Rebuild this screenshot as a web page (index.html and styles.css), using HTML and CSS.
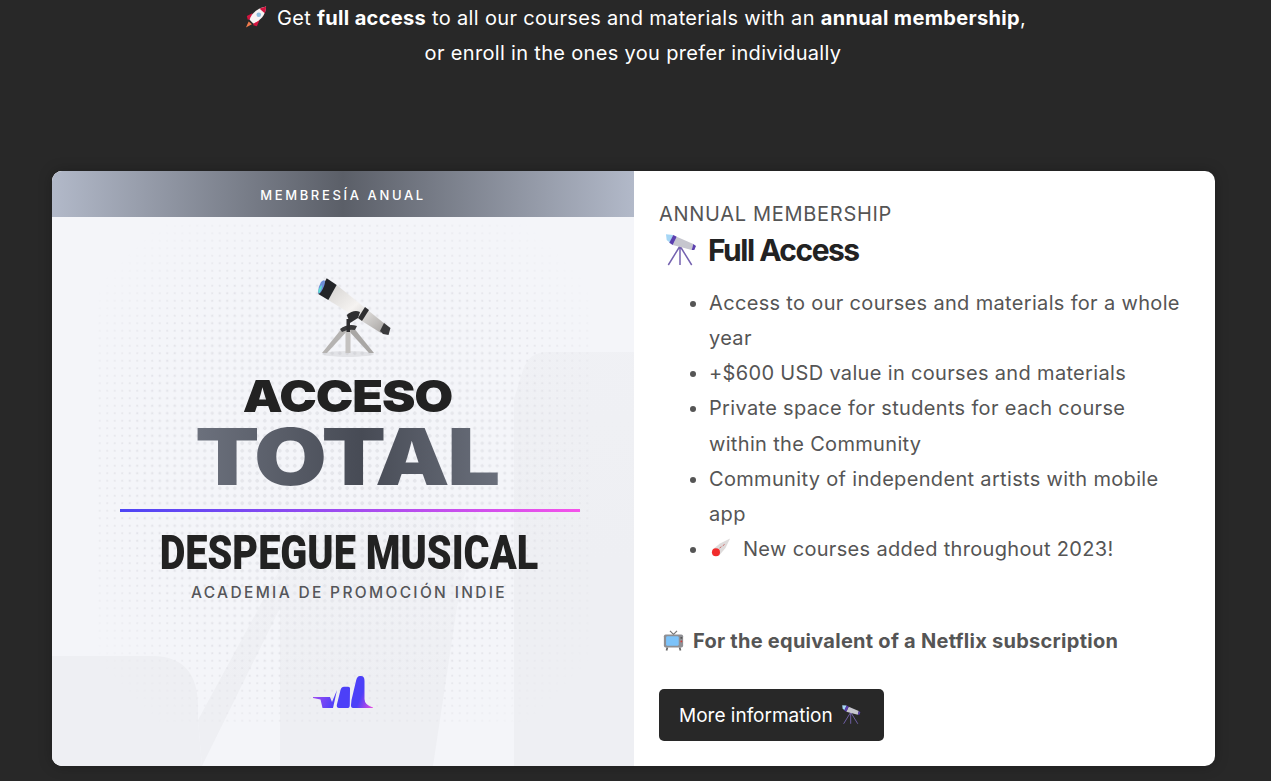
FILE: index.html
```html
<!DOCTYPE html>
<html lang="en">
<head>
<meta charset="utf-8">
<title>Membership</title>
<link rel="stylesheet" href="styles.css">
</head>
<body>
<svg class="defs" width="0" height="0" aria-hidden="true">
  <defs>
    <linearGradient id="tube" x1="0" y1="0" x2="1" y2="1">
      <stop offset="0" stop-color="#d4d2d0"/><stop offset=".45" stop-color="#f5f3f1"/><stop offset="1" stop-color="#a5a2a0"/>
    </linearGradient>
    <linearGradient id="logoGrad" gradientUnits="userSpaceOnUse" x1="0" y1="10" x2="60" y2="34">
      <stop offset="0" stop-color="#b04ff0"/><stop offset=".42" stop-color="#4c40f8"/><stop offset=".75" stop-color="#4c40f8"/><stop offset="1" stop-color="#f04be0"/>
    </linearGradient>
    <linearGradient id="markFade" x1="0" y1="0" x2="0" y2="1">
      <stop offset="0" stop-color="#eeeff3" stop-opacity=".35"/><stop offset=".7" stop-color="#eeeff3"/>
    </linearGradient>
    <linearGradient id="markFadeRight" x1="0" y1="0" x2="0" y2="1">
      <stop offset="0" stop-color="#eeeff3" stop-opacity=".75"/><stop offset=".5" stop-color="#eeeff3"/>
    </linearGradient>
    <symbol id="scope" viewBox="0 0 33 33">
      <g stroke="#7563b0" stroke-width="1.500" fill="none">
        <path d="M16 12 L4.300 31 M16 12 V31 M16 12 L27.700 31"/>
      </g>
      <path d="M12.700 2.700 L29.300 10 L27.700 16 L8.700 11 Z" fill="#c6c6ce"/>
      <path d="M2 .3 L9.300 1 L6 8.700 L2.700 6 Z" fill="#a6d6f5"/>
      <path d="M9.300 1 L12.700 2.700 L8.700 11 L5.300 8.700 Z" fill="#5b3fae"/>
      <path d="M29.300 10 L32 12 L30.300 16 L27.700 16 Z" fill="#5b3fae"/>
    </symbol>
  </defs>
</svg>

<header class="intro">
  <p class="intro-line">
    <svg class="emoji" viewBox="0 0 24 24" aria-hidden="true">
      <path d="M4 17 L1 23.500 L7.500 20 Z" fill="#f27c4d"/>
      <path d="M8 8 L2 11 L3 15 L8 14 Z M16 15 L13 22 L9 21 L10 16 Z" fill="#d3143f"/>
      <path d="M5 15 C7 8 13 2.500 23 .5 C22.500 10 17 16 9 19 Z" fill="#f7f3f3"/>
      <path d="M16 3 C18 1.800 20.500 1 23 .5 C23 3 22.500 5.500 21.500 8 Z" fill="#d3143f"/>
      <circle cx="15" cy="9.500" r="2.500" fill="#8fbfe0"/>
    </svg>
    Get <strong>full access</strong> to all our courses and materials with an <strong>annual membership</strong>,
  </p>
  <p class="intro-line intro-line-second">or enroll in the ones you prefer individually</p>
</header>

<main class="card">
  <section class="poster">
    <div class="poster-band">MEMBRESÍA ANUAL</div>
    <div class="poster-art">
      <svg class="watermark" viewBox="0 0 582 549" preserveAspectRatio="none" aria-hidden="true">
        <path d="M0 439 H100 Q146 439 146 490 V503 L150 549 H0 Z" fill="#eeeff3"/>
        <path d="M146 503 L255 302 Q262 293 275 293 H428 L405 390 L381 549 H228 V391 L150 549 Z" fill="url(#markFade)"/>
        <path d="M462 549 V182 L471 153 Q477 135 495 135 H582 V549 Z" fill="url(#markFadeRight)"/>
      </svg>
      <div class="dots"></div>
      <div class="poster-content">
        <svg class="scope-large" viewBox="0 0 80 80" aria-hidden="true">
          <ellipse cx="35" cy="77" rx="26" ry="3" fill="#000" opacity=".07"/>
          <path d="M30 50 L9 76 L14 76 L35 53 Z" fill="#b5b3b1"/>
          <path d="M40 50 L61 76 L56 76 L35 53 Z" fill="#a9a7a5"/>
          <rect x="32.500" y="52" width="5" height="24" fill="#c4c2c0"/>
          <path d="M27 52 Q35 46 44 49 L42 53 Q35 52 29 55 Z" fill="#3a3a3c"/>
          <rect x="33.500" y="42" width="3.500" height="13" fill="#2e2e30"/>
          <path d="M23.700 8 L72 47 L68 56 L15.300 23 Z" fill="url(#tube)"/>
          <path d="M13.700 1.300 L23.700 8 L15.300 23 L5.300 17 Z" fill="#232528"/>
          <path d="M8 5 Q11 2 12 4 Q12 9 8 15 Q5.500 18 5 15.500 Q5 10 8 5 Z" fill="#6d8fd8"/>
          <path d="M5.500 13 Q7 9 9 8 Q9 12 6.500 16 Q5 16.500 5.500 13 Z" fill="#5ce0d0"/>
          <path d="M52 30 L56 33 L49 44 L45 41 Z" fill="#2e2e30"/>
          <path d="M71 46 L77.500 51 L75.500 58 L70 57 L67 54 Z" fill="#3a3a3c"/>
          <path d="M33.700 38 Q41 32 47 35 L45 41 L37 46 Z" fill="#2e2e30"/>
        </svg>
        <div class="acceso">ACCESO</div>
        <div class="total">TOTAL</div>
        <div class="rule"></div>
        <div class="despegue">DESPEGUE MUSICAL</div>
        <div class="academia">ACADEMIA DE PROMOCIÓN INDIE</div>
        <svg class="logo" viewBox="0 0 60 34" aria-hidden="true">
          <path fill="url(#logoGrad)" d="M0 22 H17 L19 27 L24 15 L20 33 H9.500 L7.500 24.500 L0 23 Z"/>
          <path fill="url(#logoGrad)" d="M26 33 Q23.500 33 23.800 30 L27.500 15 Q28.500 11.700 31 11.700 H35 Q37.500 11.700 37 15 L36.800 30 Q36.800 33 35 33 Z"/>
          <path fill="url(#logoGrad)" d="M40 33 Q37.800 33 38 30 L38.500 25 L43 6 Q44 1 47 1 H48 Q51.500 1 51.500 6 V24 Q51.500 30 60 32.500 L60 33 Z"/>
        </svg>
      </div>
    </div>
  </section>

  <section class="details">
    <p class="eyebrow">ANNUAL MEMBERSHIP</p>
    <h2 class="title">
      <svg class="emoji-title" aria-hidden="true"><use href="#scope"/></svg>
      Full Access
    </h2>
    <ul class="features">
      <li>Access to our courses and materials for a whole year</li>
      <li>+$600 USD value in courses and materials</li>
      <li>Private space for students for each course within the Community</li>
      <li>Community of independent artists with mobile app</li>
      <li>
        <svg class="emoji emoji-comet" viewBox="0 0 24 24" aria-hidden="true">
          <path d="M23 .5 L12 6 L4.500 12 L4 19 L11 19 L18 11 Z" fill="#dedbdb"/>
          <circle cx="7.600" cy="15.500" r="4.400" fill="#f12c2c"/>
          <path d="M11.500 11 l2 -1.500 M15 8.500 l2 -1.500" stroke="#c96565" stroke-width="1"/>
        </svg>
        New courses added throughout 2023!
      </li>
    </ul>
    <p class="note">
      <svg class="emoji" viewBox="0 0 24 24" aria-hidden="true">
        <path d="M8 1 L12 5 L16 1" stroke="#777" stroke-width="1.400" fill="none"/>
        <rect x="1" y="5" width="22" height="15" rx="2" fill="#8f8f93"/>
        <rect x="3.500" y="7" width="14.500" height="11" rx="1.500" fill="#7cc3fa"/>
        <rect x="20" y="8" width="2" height="2" fill="#555"/>
        <circle cx="21" cy="13" r="1" fill="#d63a3a"/>
        <path d="M5 20 L4 23.500 M19 20 L20 23.500" stroke="#666" stroke-width="2"/>
      </svg>
      For the equivalent of a Netflix subscription
    </p>
    <a class="cta" href="#">More information
      <svg class="emoji-cta" aria-hidden="true"><use href="#scope"/></svg>
    </a>
  </section>
</main>
</body>
</html>
```

FILE: styles.css
```css
* { box-sizing: border-box; }
html, body { margin: 0; height: 100%; overflow: hidden; }
body {
  background: #282828;
  font-family: "Inter", "Noto Sans", sans-serif;
  color: #fff;
}
.defs { display: block; height: 0; }

.intro {
  padding-top: 1px;
  height: 171px;
  text-align: center;
  font-size: 20px;
  line-height: 35px;
}
.intro-line { margin: 0; letter-spacing: .33px; }
.intro-line-second { padding-right: 5px; }
.intro-line strong { font-weight: 700; }
.emoji {
  width: 22px;
  height: 22px;
  vertical-align: -3px;
  margin-right: 4px;
}

.card {
  display: flex;
  width: 1163px;
  height: 595px;
  margin-left: 52px;
  background: #fff;
  border-radius: 10px;
  overflow: hidden;
  box-shadow: 0 0 14px rgba(0, 0, 0, .25);
}

.poster {
  flex: 0 0 582px;
  display: flex;
  flex-direction: column;
  background: #f4f5f9;
}
.poster-band {
  height: 46px;
  padding-top: 1px;
  display: flex;
  align-items: center;
  justify-content: center;
  background: linear-gradient(90deg, #b2b9c9 0%, #5b5f68 50%, #b2b9c9 100%);
  font-size: 13px;
  letter-spacing: 2.650px;
  font-weight: 500;
  color: #fff;
}
.poster-art {
  position: relative;
  flex: 1;
  overflow: hidden;
}
.watermark {
  position: absolute;
  inset: 0;
  width: 100%;
  height: 100%;
}
.dots {
  position: absolute;
  left: 44px;
  top: 5px;
  width: 495px;
  height: 505px;
  background-image: radial-gradient(circle, #e4e5ea .8px, transparent 1.200px);
  background-size: 7.500px 7.500px;
  -webkit-mask-image: radial-gradient(ellipse 62% 62% at 50% 50%, #000 70%, transparent 100%);
  mask-image: radial-gradient(ellipse 62% 62% at 50% 50%, #000 70%, transparent 100%);
}
.dots::after {
  content: "";
  position: absolute;
  inset: 0;
  background-image: radial-gradient(circle, #e5e6eb 1.500px, transparent 2px);
  background-size: 7.500px 7.500px;
  -webkit-mask-image: radial-gradient(ellipse 45% 45% at 50% 50%, #000 40%, transparent 100%);
  mask-image: radial-gradient(ellipse 45% 45% at 50% 50%, #000 40%, transparent 100%);
}
.poster-content {
  position: relative;
  display: flex;
  flex-direction: column;
  align-items: center;
  padding: 60px 0 0 12px;
}
.scope-large {
  width: 80px;
  height: 80px;
  margin-left: 8px;
  filter: blur(.3px);
}
.acceso {
  margin: 20px 4px 0 0;
  font-family: "Inter", sans-serif;
  font-weight: 900;
  font-size: 44px;
  line-height: 38px;
  letter-spacing: -1px;
  color: #222;
  transform: scaleX(1.145);
}
.total {
  margin: 11px 4px 0 0;
  font-family: "Inter", sans-serif;
  font-weight: 900;
  font-size: 78px;
  line-height: 62px;
  letter-spacing: -2px;
  transform: scaleX(1.206);
  background: linear-gradient(90deg, #6c717d 0%, #474b55 55%, #6a6f7b 100%);
  -webkit-background-clip: text;
  background-clip: text;
  color: transparent;
}
.rule {
  width: 460px;
  height: 3px;
  margin: 21px 0 0 2px;
  background: linear-gradient(90deg, #4d45f5, #f552ea);
}
.despegue {
  margin-top: 19px;
  font-family: "Roboto", sans-serif;
  font-weight: 900;
  font-size: 49px;
  line-height: 44px;
  white-space: nowrap;
  color: #222;
  transform: scaleX(.809);
}
.academia {
  margin-top: 8px;
  font-size: 15.500px;
  line-height: 20px;
  letter-spacing: 2.330px;
  font-weight: 500;
  color: #55565a;
}
.logo {
  width: 60px;
  height: 34px;
  margin-top: 72px;
  margin-left: -12px;
}

.details {
  flex: 1;
  padding: 32px 30px 0 25px;
  color: #555;
}
.eyebrow {
  margin: 0;
  font-size: 20px;
  line-height: 22px;
  letter-spacing: .7px;
}
.title {
  display: flex;
  align-items: center;
  gap: 11px;
  margin: 3px 0 0 5px;
  height: 44px;
  font-size: 30px;
  font-weight: 700;
  letter-spacing: -1.500px;
  color: #222;
}
.emoji-title {
  width: 33px;
  height: 33px;
}
.features {
  margin: 13.700px 0 0;
  padding-left: 50px;
  font-size: 20px;
  line-height: 35.200px;
  letter-spacing: .33px;
}
.emoji-comet { margin-right: 6px; vertical-align: -4px; }
.note {
  margin: 58.700px 0 0;
  font-size: 20px;
  line-height: 30px;
  font-weight: 700;
  letter-spacing: .26px;
  white-space: nowrap;
}
.note .emoji { width: 21px; height: 21px; margin: 0 4px 0 4px; }
.cta {
  display: inline-flex;
  align-items: center;
  gap: 8px;
  margin-top: 33px;
  height: 52px;
  padding: 0 23px 0 20px;
  background: #282828;
  border-radius: 5px;
  color: #fff;
  font-size: 19px;
  text-decoration: none;
}
.emoji-cta { width: 20px; height: 20px; }
```
